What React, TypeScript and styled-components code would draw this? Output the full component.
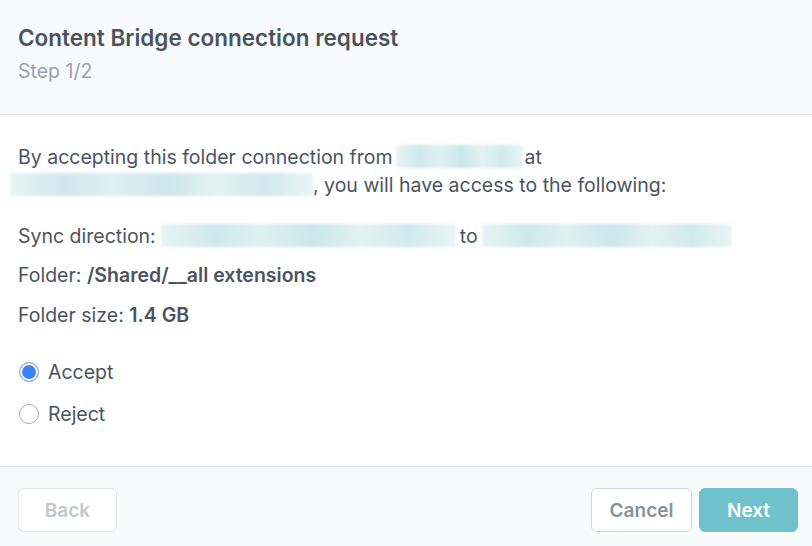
import styled, { createGlobalStyle } from 'styled-components';

const GlobalStyle = createGlobalStyle`
  html, body {
    margin: 0;
    padding: 0;
    background: #ffffff;
  }
  body {
    font-family: Inter, 'Noto Sans', sans-serif;
    -webkit-font-smoothing: antialiased;
  }
`;

const Dialog = styled.div`
  width: 812px;
  height: 546px;
  display: flex;
  flex-direction: column;
  background: #ffffff;
  overflow: hidden;
`;

const Header = styled.div`
  background: #f9fafb;
  border-bottom: 1px solid #e5e7eb;
  padding: 24px 18px 31px;
  display: flex;
  flex-direction: column;
  gap: 7px;
`;

const Title = styled.div`
  font-size: 22.5px;
  line-height: 28px;
  font-weight: 600;
  color: #4b5360;
`;

const Subtitle = styled.div`
  font-size: 19.5px;
  line-height: 24px;
  color: #9aa1ab;
`;

const Body = styled.div`
  flex: 1;
  padding: 28px 18px 0;
  color: #4b5360;
  font-size: 19.5px;
`;

const Intro = styled.p`
  margin: 0 0 25px;
  line-height: 28px;
`;

const Row = styled.div<{ $gap?: number }>`
  line-height: 24px;
  margin-bottom: ${(p) => p.$gap ?? 15}px;
  white-space: nowrap;
`;

const Strong = styled.span`
  font-weight: 600;
`;

const Redacted = styled.span<{ $w: number; $l?: number; $r?: number }>`
  display: inline-block;
  vertical-align: middle;
  width: ${(p) => p.$w}px;
  height: 23px;
  margin: -4px ${(p) => p.$r ?? 0}px 0 ${(p) => p.$l ?? 0}px;
  background: linear-gradient(
    90deg,
    #e6f4f6 0%,
    #cfe8ec 18%,
    #ddf0f3 34%,
    #cbe6ea 52%,
    #e2f2f4 68%,
    #d0e9ed 84%,
    #e9f5f7 100%
  );
  filter: blur(1.5px);
`;

const Options = styled.div`
  margin-top: 33px;
  display: flex;
  flex-direction: column;
  gap: 18px;
`;

const Option = styled.label`
  display: flex;
  align-items: center;
  gap: 9px;
  font-size: 19.5px;
  line-height: 24px;
  color: #4b5360;
`;

const Radio = styled.span<{ $checked?: boolean }>`
  width: 20px;
  height: 20px;
  margin-left: 1px;
  border-radius: 50%;
  box-sizing: border-box;
  border: 1px solid #a3a9b2;
  background: ${(p) => (p.$checked ? '#3b82f6' : '#ffffff')};
  box-shadow: ${(p) => (p.$checked ? 'inset 0 0 0 2px #ffffff' : 'none')};
`;

const Footer = styled.div`
  background: #f9fafb;
  border-top: 1px solid #e5e7eb;
  padding: 21px 14px 14px 18px;
  display: flex;
  align-items: center;
  gap: 7px;
`;

const Spacer = styled.div`
  flex: 1;
`;

const Button = styled.button<{ $variant: 'disabled' | 'outline' | 'primary'; $w: number }>`
  width: ${(p) => p.$w}px;
  height: 44px;
  border-radius: 6px;
  font-family: Inter, 'Noto Sans', sans-serif;
  font-size: 19px;
  font-weight: 600;
  cursor: pointer;
  border: 1px solid
    ${(p) => (p.$variant === 'primary' ? '#6fc1cb' : p.$variant === 'outline' ? '#d3d7dd' : '#e3e6ea')};
  background: ${(p) => (p.$variant === 'primary' ? '#6fc1cb' : '#ffffff')};
  color: ${(p) => (p.$variant === 'primary' ? '#ffffff' : p.$variant === 'outline' ? '#8a919b' : '#c3c7cd')};
`;

export default function App() {
  return (
    <>
      <GlobalStyle />
      <Dialog>
        <Header>
          <Title>Content Bridge connection request</Title>
          <Subtitle>Step 1/2</Subtitle>
        </Header>
        <Body>
          <Intro>
            By accepting this folder connection from
            <Redacted $w={127} $l={3} $r={2} />
            at
            <br />
            <Redacted $w={303} style={{ marginLeft: -8 }} />, you will have access to the following:
          </Intro>
          <Row>
            Sync direction:
            <Redacted $w={295} $l={5} $r={4} />
            to
            <Redacted $w={250} $l={4} />
          </Row>
          <Row $gap={16}>
            Folder: <Strong>/Shared/__all extensions</Strong>
          </Row>
          <Row $gap={0}>
            Folder size: <Strong>1.4 GB</Strong>
          </Row>
          <Options>
            <Option>
              <Radio $checked />
              Accept
            </Option>
            <Option>
              <Radio />
              Reject
            </Option>
          </Options>
        </Body>
        <Footer>
          <Button $variant="disabled" $w={99} disabled>
            Back
          </Button>
          <Spacer />
          <Button $variant="outline" $w={101}>
            Cancel
          </Button>
          <Button $variant="primary" $w={99}>
            Next
          </Button>
        </Footer>
      </Dialog>
    </>
  );
}
